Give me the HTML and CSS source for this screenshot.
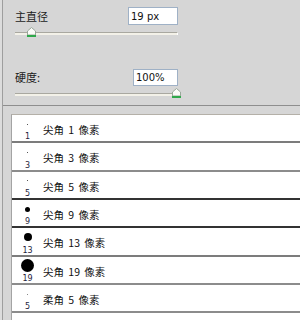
FILE: index.html
```html
<!DOCTYPE html>
<html lang="zh-CN">
<head>
    <meta charset="UTF-8">
    <meta name="viewport" content="width=device-width, initial-scale=1.0">
    <title>画笔预设</title>
    <link rel="stylesheet" href="styles.css">
</head>
<body>

    <div class="frame">
        <div class="controls">
            <div class="field field-size">
                <label class="field-label" for="diameter">主直径</label>
                <input class="field-input input-size" type="text" id="diameter" value="19 px">
            </div>
            <div class="slider">
                <div class="track"></div>
                <svg class="thumb thumb-size" width="9" height="10" viewBox="0 0 9 10">
                    <polygon points="0.5,4 4.5,0.5 8.5,4 8.5,8 0.5,8" fill="#fbfbf8" stroke="#9aa89a"/>
                    <rect x="0" y="8" width="9" height="2" fill="#2fa84a"/>
                </svg>
            </div>

            <div class="field field-hard">
                <label class="field-label" for="hardness">硬度:</label>
                <input class="field-input input-hard" type="text" id="hardness" value="100%">
            </div>
            <div class="slider">
                <div class="track"></div>
                <svg class="thumb thumb-hard" width="9" height="10" viewBox="0 0 9 10">
                    <polygon points="0.5,4 4.5,0.5 8.5,4 8.5,8 0.5,8" fill="#fbfbf8" stroke="#9aa89a"/>
                    <rect x="0" y="8" width="9" height="2" fill="#2fa84a"/>
                </svg>
            </div>
        </div>

        <ul class="brushes">
            <li class="brush sep-mid">
                <div class="preview"><span class="tip"><i class="dot dot-1"></i></span><span class="size">1</span></div>
                <span class="name">尖角 1 像素</span>
            </li>
            <li class="brush sep-light">
                <div class="preview"><span class="tip"><i class="dot dot-1"></i></span><span class="size">3</span></div>
                <span class="name">尖角 3 像素</span>
            </li>
            <li class="brush sep-dark">
                <div class="preview"><span class="tip"><i class="dot dot-1"></i></span><span class="size">5</span></div>
                <span class="name">尖角 5 像素</span>
            </li>
            <li class="brush sep-dark">
                <div class="preview"><span class="tip"><i class="dot dot-9"></i></span><span class="size">9</span></div>
                <span class="name">尖角 9 像素</span>
            </li>
            <li class="brush sep-mid">
                <div class="preview"><span class="tip"><i class="dot dot-13"></i></span><span class="size">13</span></div>
                <span class="name">尖角 13 像素</span>
            </li>
            <li class="brush sep-light">
                <div class="preview"><span class="tip"><i class="dot dot-19"></i></span><span class="size">19</span></div>
                <span class="name">尖角 19 像素</span>
            </li>
            <li class="brush sep-light">
                <div class="preview"><span class="tip"><i class="dot dot-soft"></i></span><span class="size">5</span></div>
                <span class="name">柔角 5 像素</span>
            </li>
            <li class="brush">
                <div class="preview"><span class="tip"><i class="dot dot-soft"></i></span></div>
            </li>
        </ul>
    </div>

</body>
</html>
```

FILE: styles.css
```css
html, body {
    margin: 0;
    padding: 0;
}

body {
    width: 300px;
    height: 320px;
    overflow: hidden;
    background-color: #dcdcdc;
    padding-left: 2px;
    box-sizing: border-box;
    font-family: "Noto Sans CJK SC", "Liberation Sans", sans-serif;
}

.frame {
    height: 100%;
    overflow: hidden;
    background-color: #d6d6d6;
    border-left: 1px solid #9e9e9e;
}

.controls {
    padding: 0 122px 7px 12px;
    border-bottom: 1px solid #8e8e8e;
}

.field {
    display: flex;
    justify-content: space-between;
    align-items: center;
}

.field-size {
    padding-top: 7px;
    height: 18px;
}

.field-hard {
    margin-top: 32px;
    height: 17px;
}

.field-label {
    font-size: 11px;
    color: #1a1a1a;
    line-height: 1;
}

.field-input {
    height: 100%;
    box-sizing: border-box;
    border: 1px solid #9fb1c6;
    background-color: #fff;
    padding: 0 0 0 2px;
    margin: 0;
    font-family: "DejaVu Sans", sans-serif;
    font-size: 10px;
    color: #111;
    outline: none;
}

.input-size {
    width: 50px;
}

.input-hard {
    width: 45px;
}

.slider {
    position: relative;
    height: 10px;
    margin-top: 2px;
}

.track {
    position: absolute;
    top: 5px;
    left: 0;
    right: 0;
    height: 2px;
    border-top: 1px solid #a9a8a0;
    background-color: #f3f1e8;
    border-right: 1px solid #fff;
}

.thumb {
    position: absolute;
    top: 0;
    display: block;
}

.thumb-size {
    left: 12px;
}

.thumb-hard {
    right: -3px;
}

.brushes {
    list-style: none;
    margin: 8px 0 0 8px;
    padding: 0;
    background-color: #fff;
    border-top: 1px solid #b4b0a8;
    border-left: 1px solid #a4a4a4;
}

.brush {
    display: flex;
    align-items: center;
    height: 26.33px;
    border-bottom: 2px solid #808080;
}

.sep-mid {
    border-bottom-color: #7c7c7c;
}

.sep-light {
    border-bottom-color: #8c8c8c;
}

.sep-dark {
    border-bottom-color: #333;
}

.preview {
    width: 31px;
    height: 100%;
    display: flex;
    flex-direction: column;
    align-items: center;
}

.tip {
    height: 19px;
    display: flex;
    align-items: center;
    justify-content: center;
}

.dot {
    display: block;
    border-radius: 50%;
    background-color: #000;
}

.dot-1 {
    width: 1px;
    height: 1px;
    border-radius: 0;
    background-color: #555;
}

.dot-9 {
    width: 5px;
    height: 5px;
}

.dot-13 {
    width: 8px;
    height: 8px;
}

.dot-19 {
    width: 13px;
    height: 13px;
}

.dot-soft {
    width: 1px;
    height: 1px;
    border-radius: 0;
    background-color: #888;
}

.size {
    font-family: "DejaVu Sans", sans-serif;
    font-size: 8px;
    line-height: 8px;
    color: #1e1e3c;
}

.name {
    font-size: 10.5px;
    word-spacing: 2px;
    color: #111;
    margin-top: 3px;
}
```
